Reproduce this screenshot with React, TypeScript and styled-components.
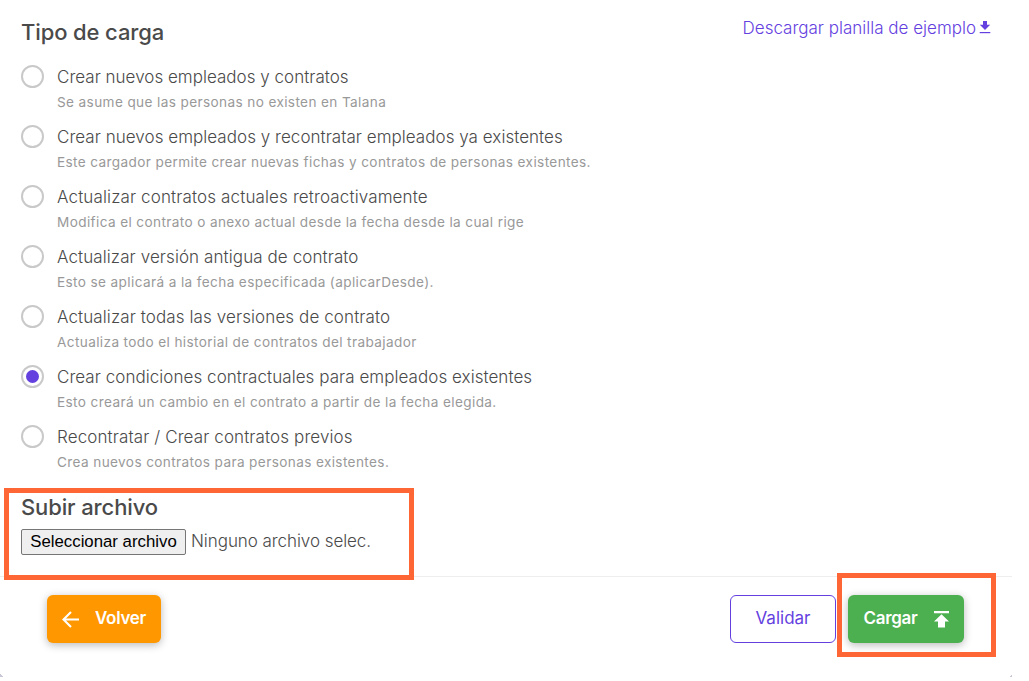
import { FC, useState } from 'react';
import styled, { createGlobalStyle } from 'styled-components';

const GlobalStyle = createGlobalStyle`
    * {
        box-sizing: border-box;
    }
    body {
        margin: 0;
        background: #fff;
        color: #4a4a4a;
        font-family: Inter, 'Liberation Sans', sans-serif;
        font-size: 17px;
    }
`;

const StyledCard = styled.main`
    position: relative;
    width: 1012px;
    height: 677px;
    display: flex;
    flex-direction: column;
    background: #fff;
`;

const StyledBody = styled.div`
    height: 577px;
    padding: 16px 21px 0;
    border-bottom: 1px solid #eee;
`;

const StyledHeader = styled.div`
    display: flex;
    justify-content: space-between;
    align-items: flex-start;
    height: 46px;
`;

const StyledTitle = styled.h2`
    margin: 0;
    font-size: 22px;
    line-height: 32px;
    font-weight: 500;
    letter-spacing: -0.12px;
    white-space: nowrap;
`;

const StyledLink = styled.a`
    display: flex;
    align-items: center;
    gap: 3px;
    height: 24px;
    color: #6441df;
    font-weight: 300;
    white-space: nowrap;
    cursor: pointer;
`;

const StyledOptions = styled.div`
    display: flex;
    flex-direction: column;
    height: 429px;
`;

const StyledOption = styled.label`
    display: flex;
    gap: 13px;
    height: 60px;
    padding-top: 3px;
    cursor: pointer;
`;

const StyledRadio = styled.input`
    appearance: none;
    flex: none;
    display: grid;
    place-items: center;
    width: 23px;
    height: 23px;
    margin: 0;
    border: 2px solid #c9c9c9;
    border-radius: 50%;
    &:checked::before{
        content: '';
        width: 13px;
        height: 13px;
        border-radius: 50%;
        background: #6441df;
    }
`;

const StyledOptionText = styled.div`
    white-space: nowrap;
`;

const StyledOptionName = styled.div<{ $tracking: number }>`
    font-weight: 300;
    line-height: 24px;
    letter-spacing: ${({ $tracking }) => $tracking}px;
`;

const StyledOptionHelp = styled.div`
    margin-top: 3px;
    color: #999;
    font-size: 13.6px;
    line-height: 20px;
    letter-spacing: 0.38px;
`;

const StyledFileRow = styled.div`
    display: flex;
    align-items: center;
    gap: 5px;
    height: 26px;
    margin-top: 6px;
    font-weight: 300;
    span{
        padding-bottom: 2px;
        letter-spacing: -0.06px;
    }
`;

const StyledFileButton = styled.button`
    width: 165px;
    height: 26px;
    padding: 0 0 1px;
    border: 1px solid #767676;
    border-radius: 2px;
    background: #efefef;
    color: #000;
    font-family: 'Liberation Sans', Arial, sans-serif;
    font-size: 16.8px;
    white-space: nowrap;
`;

const StyledFooter = styled.footer`
    display: flex;
    align-items: flex-start;
    justify-content: space-between;
    padding: 18px 48px 0 47px;
`;

const StyledActions = styled.div`
    display: flex;
    gap: 12px;
`;

const StyledButton = styled.button<{ $width: number; $color?: string; $gap?: number }>`
    display: flex;
    align-items: center;
    justify-content: center;
    gap: ${({ $gap = 0 }) => $gap}px;
    width: ${({ $width }) => $width}px;
    height: 48px;
    padding: 0 0 2px;
    border: ${({ $color }) => ($color ? '0' : '1px solid #6441df')};
    border-radius: 6px;
    background: ${({ $color = '#fff' }) => $color};
    box-shadow: ${({ $color }) => ($color ? '0 2px 8px rgba(0, 0, 0, 0.28)' : 'none')};
    color: ${({ $color }) => ($color ? '#fff' : '#6441df')};
    font-family: inherit;
    font-size: 17px;
    font-weight: ${({ $color }) => ($color ? 600 : 400)};
    letter-spacing: ${({ $color }) => ($color ? '-0.3px' : '0')};
    cursor: pointer;
    svg{
        margin-top: 2px;
    }
`;

// orange frames laid over the steps the user has to follow
const StyledHighlight = styled.div<{ $x: number; $y: number; $w: number; $h: number }>`
    position: absolute;
    left: ${({ $x }) => $x}px;
    top: ${({ $y }) => $y}px;
    width: ${({ $w }) => $w}px;
    height: ${({ $h }) => $h}px;
    border: 5px solid #ff6636;
    pointer-events: none;
`;

const StyledCorner = styled.span<{ $right?: boolean }>`
    position: absolute;
    bottom: 0;
    ${({ $right }) => ($right ? 'right: 0;' : 'left: 0;')}
    width: 3px;
    height: 3px;
    background: linear-gradient(${({ $right }) => ($right ? '135deg' : '225deg')}, transparent 50%, #c8c8d8 50%);
`;

const DownloadIcon = () => (
    <svg width='12' height='14' viewBox='0 0 12 14' fill='currentColor'>
        <path d='M4 0h4v3.7h3.2L6 8.9.8 3.7H4z' />
        <path d='M.7 11h10.6v1.2H.7z' />
    </svg>
);

const BackIcon = () => (
    <svg width='17' height='17' viewBox='0 0 17 17' fill='none' stroke='currentColor' strokeWidth='2.1'>
        <path d='M17 8.5H2M9 1L1.5 8.5 9 16' />
    </svg>
);

const UploadIcon = () => (
    <svg width='15' height='17' viewBox='0 0 15 17' fill='currentColor'>
        <path d='M0 0h15v2.2H0zM7.5 3.2L15 10.6h-4V16.5H4V10.6H0z' />
    </svg>
);

const options = [
    { name: 'Crear nuevos empleados y contratos', help: 'Se asume que las personas no existen en Talana', tracking: 0.02 },
    { name: 'Crear nuevos empleados y recontratar empleados ya existentes', help: 'Este cargador permite crear nuevas fichas y contratos de personas existentes.', tracking: 0.04 },
    { name: 'Actualizar contratos actuales retroactivamente', help: 'Modifica el contrato o anexo actual desde la fecha desde la cual rige', tracking: 0.13 },
    { name: 'Actualizar versión antigua de contrato', help: 'Esto se aplicará a la fecha especificada (aplicarDesde).', tracking: 0.09 },
    { name: 'Actualizar todas las versiones de contrato', help: 'Actualiza todo el historial de contratos del trabajador', tracking: 0.1 },
    { name: 'Crear condiciones contractuales para empleados existentes', help: 'Esto creará un cambio en el contrato a partir de la fecha elegida.', tracking: 0.05 },
    { name: 'Recontratar / Crear contratos previos', help: 'Crea nuevos contratos para personas existentes.', tracking: 0.11 }
];

const App: FC = () => {
    const [selected, setSelected] = useState(5);

    return (
        <>
            <GlobalStyle />
            <StyledCard>
                <StyledBody>
                    <StyledHeader>
                        <StyledTitle>Tipo de carga</StyledTitle>
                        <StyledLink>Descargar planilla de ejemplo<DownloadIcon /></StyledLink>
                    </StyledHeader>
                    <StyledOptions>
                        {options.map((item, key) => (
                            <StyledOption key={key}>
                                <StyledRadio type='radio' name='tipo' checked={selected === key} onChange={() => setSelected(key)} />
                                <StyledOptionText>
                                    <StyledOptionName $tracking={item.tracking}>{item.name}</StyledOptionName>
                                    <StyledOptionHelp>{item.help}</StyledOptionHelp>
                                </StyledOptionText>
                            </StyledOption>
                        ))}
                    </StyledOptions>
                    <StyledTitle>Subir archivo</StyledTitle>
                    <StyledFileRow>
                        <StyledFileButton>Seleccionar archivo</StyledFileButton>
                        <span>Ninguno archivo selec.</span>
                    </StyledFileRow>
                </StyledBody>
                <StyledFooter>
                    <StyledButton $width={114} $color='#ff9800' $gap={16}><BackIcon />Volver</StyledButton>
                    <StyledActions>
                        <StyledButton $width={106}>Validar</StyledButton>
                        <StyledButton $width={116} $color='#4caf50' $gap={16}>Cargar<UploadIcon /></StyledButton>
                    </StyledActions>
                </StyledFooter>
                <StyledHighlight $x={4} $y={488} $w={410} $h={92} />
                <StyledHighlight $x={837} $y={573} $w={159} $h={84} />
                <StyledCorner />
                <StyledCorner $right />
            </StyledCard>
        </>
    );
};

export default App;
